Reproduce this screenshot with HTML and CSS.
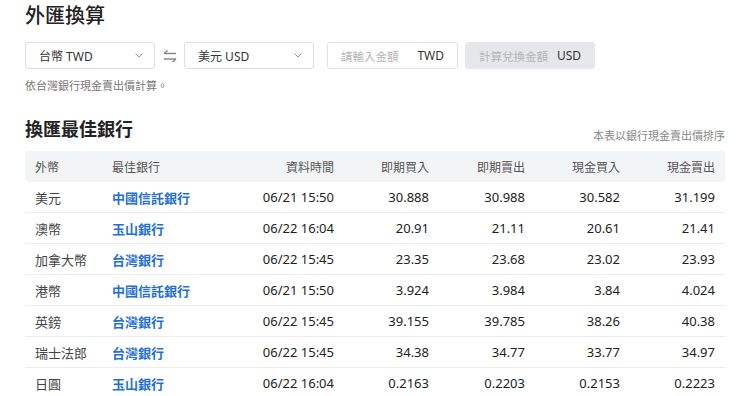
FILE: index.html
```html
<!DOCTYPE html>
<html>
<head>
    <meta charset="utf-8" />
    <link rel="stylesheet" href="styles.css">
    <title>外匯換算</title>
</head>
<body class="body">
    <div class="page">
        <h1 class="title">外匯換算</h1>
        <div class="converter">
            <div class="select">
                <span>台幣 TWD</span>
                <svg class="chev" width="8" height="5" viewBox="0 0 8 5"><path d="M0.5 0.5 L4 4 L7.5 0.5" fill="none" stroke="#999" stroke-width="1"/></svg>
            </div>
            <svg class="swap" width="14" height="14" viewBox="0 0 14 14">
                <path d="M1 4.5 H13 M1 4.5 L4.5 1.5" fill="none" stroke="#888" stroke-width="1.4"/>
                <path d="M1 10 H13 M13 10 L9.5 13" fill="none" stroke="#888" stroke-width="1.4"/>
            </svg>
            <div class="select">
                <span>美元 USD</span>
                <svg class="chev" width="8" height="5" viewBox="0 0 8 5"><path d="M0.5 0.5 L4 4 L7.5 0.5" fill="none" stroke="#999" stroke-width="1"/></svg>
            </div>
            <div class="amount">
                <span class="placeholder">請輸入金額</span>
                <span class="unit">TWD</span>
            </div>
            <div class="amount result">
                <span class="placeholder">計算兌換金額</span>
                <span class="unit">USD</span>
            </div>
        </div>
        <p class="note">依台灣銀行現金賣出價計算。</p>

        <div class="section-head">
            <h2 class="subtitle">換匯最佳銀行</h2>
            <span class="sort-note">本表以銀行現金賣出價排序</span>
        </div>

        <table class="rates">
            <colgroup>
                <col style="width:77px">
                <col style="width:137px">
                <col style="width:105px">
                <col style="width:95px">
                <col style="width:96px">
                <col style="width:95px">
                <col style="width:95px">
            </colgroup>
            <thead>
                <tr>
                    <th class="left">外幣</th>
                    <th class="left">最佳銀行</th>
                    <th>資料時間</th>
                    <th>即期買入</th>
                    <th>即期賣出</th>
                    <th>現金買入</th>
                    <th>現金賣出</th>
                </tr>
            </thead>
            <tbody>
                <tr><td class="cur">美元</td><td class="bank">中國信託銀行</td><td>06/21 15:50</td><td>30.888</td><td>30.988</td><td>30.582</td><td>31.199</td></tr>
                <tr><td class="cur">澳幣</td><td class="bank">玉山銀行</td><td>06/22 16:04</td><td>20.91</td><td>21.11</td><td>20.61</td><td>21.41</td></tr>
                <tr><td class="cur">加拿大幣</td><td class="bank">台灣銀行</td><td>06/22 15:45</td><td>23.35</td><td>23.68</td><td>23.02</td><td>23.93</td></tr>
                <tr><td class="cur">港幣</td><td class="bank">中國信託銀行</td><td>06/21 15:50</td><td>3.924</td><td>3.984</td><td>3.84</td><td>4.024</td></tr>
                <tr><td class="cur">英鎊</td><td class="bank">台灣銀行</td><td>06/22 15:45</td><td>39.155</td><td>39.785</td><td>38.26</td><td>40.38</td></tr>
                <tr><td class="cur">瑞士法郎</td><td class="bank">台灣銀行</td><td>06/22 15:45</td><td>34.38</td><td>34.77</td><td>33.77</td><td>34.97</td></tr>
                <tr><td class="cur">日圓</td><td class="bank">玉山銀行</td><td>06/22 16:04</td><td>0.2163</td><td>0.2203</td><td>0.2153</td><td>0.2223</td></tr>
            </tbody>
        </table>
    </div>
</body>
</html>
```

FILE: styles.css
```css
.body {
    margin: 0;
    background-color: #fff;
    color: #222;
    font-family: "Noto Sans", "Noto Sans CJK TC", sans-serif;
}
.page {
    padding: 2px 15px 0 25px;
}
.title {
    margin: 0;
    font-size: 20px;
    line-height: 28px;
    font-weight: 500;
}
.converter {
    display: flex;
    align-items: center;
    margin-top: 12px;
    height: 27px;
}
.select {
    box-sizing: border-box;
    width: 130px;
    height: 27px;
    border: 1px solid #dedede;
    border-radius: 3px;
    display: flex;
    align-items: center;
    justify-content: space-between;
    padding: 0 11px 0 13px;
    font-size: 12px;
    color: #333;
}
.swap {
    margin: 0 7px 0 8px;
}
.amount {
    box-sizing: border-box;
    width: 131px;
    height: 27px;
    margin-left: 13px;
    border: 1px solid #e2e2e2;
    border-radius: 3px;
    display: flex;
    align-items: center;
    justify-content: space-between;
    padding: 0 13px 0 13px;
    font-size: 12px;
}
.result {
    width: 130px;
    margin-left: 7px;
    background-color: #e5e7ea;
    border-color: #e5e7ea;
}
.placeholder {
    color: #b5b5b5;
    font-size: 11.5px;
}
.unit {
    color: #333;
}
.note {
    margin: 9px 0 0 0;
    font-size: 11px;
    line-height: 16px;
    color: #777;
}
.section-head {
    display: flex;
    justify-content: space-between;
    align-items: baseline;
    margin-top: 22px;
}
.subtitle {
    margin: 0;
    font-size: 18px;
    line-height: 26px;
    font-weight: 700;
}
.sort-note {
    font-size: 11px;
    color: #888;
    position: relative;
    top: 4px;
}
.rates {
    margin-top: 9px;
    width: 700px;
    table-layout: fixed;
    border-collapse: collapse;
}
.rates th {
    height: 31px;
    padding: 0 10px;
    background-color: #f3f4f5;
    font-size: 12px;
    font-weight: 400;
    color: #555;
    text-align: right;
}
.rates th:first-child {
    border-radius: 4px 0 0 4px;
}
.rates th:last-child {
    border-radius: 0 4px 4px 0;
}
.rates th.left {
    text-align: left;
}
.rates td {
    height: 30px;
    padding: 0 10px;
    border-bottom: 1px solid #ececec;
    font-size: 13px;
    color: #222;
    text-align: right;
}
.rates td.cur {
    text-align: left;
    color: #444;
}
.rates td.bank {
    text-align: left;
    color: #1f6fd6;
    font-weight: 600;
}
```
